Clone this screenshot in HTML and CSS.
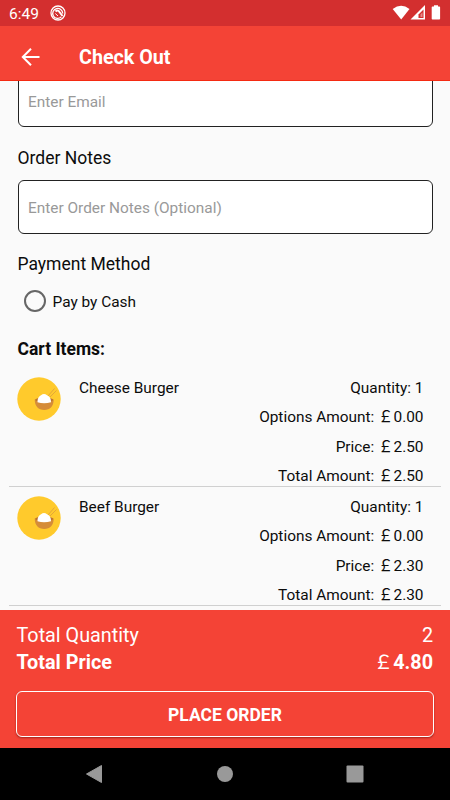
FILE: index.html
```html
<!DOCTYPE html>
<html lang="en">
<head>
<meta charset="utf-8">
<title>Check Out</title>
<link rel="stylesheet" href="styles.css">
</head>
<body>
<div class="screen">
  <div class="status">
    <span class="clock">6:49</span>
    <svg class="app-icon" width="16" height="16" viewBox="0 0 16 16" fill="none" stroke="#fff"><circle cx="8" cy="8" r="7" stroke-width="1.3"/><path d="M11.300 11.900A5 5 0 1 1 12.700 8.500" stroke-width="1.300"/><path d="M5.500 6.500Q8 4.500 9.500 7L12.500 11" stroke-width="2"/><path d="M5.300 8.500L8 11" stroke-width="1"/></svg>
    <svg class="signals" width="50" height="16" viewBox="0 0 50 16"><path d="M.7 4Q9.200-2.400 17.500 4L9.200 14.500Z" fill="#fff"/><path d="M33 0V14.500H18.500Z" fill="#fff"/><path d="M31.500 4.500V13H26.500V9.500Z" fill="#d32f2f"/><path d="M30.500 7.500V12H28.500V9.300Z" fill="#fff" opacity=".45"/><path d="M42 .2h4v1.300h1.300q.8 0 .8.800v11.400q0 .8-.8.800h-6.800q-.8 0-.8-.8V2.300q0-.8.800-.8H42Z" fill="#fff"/></svg>
  </div>
  <header class="appbar">
    <svg class="back" width="20" height="20" viewBox="0 0 20 20" fill="none" stroke="#fff" stroke-width="2"><path d="M18.500 10H2.500M10 1.800L1.800 10L10 18.200"/></svg>
    <h1 class="title">Check Out</h1>
  </header>
  <main class="content">
    <div class="field email">Enter Email</div>
    <h2 class="label">Order Notes</h2>
    <div class="field">Enter Order Notes (Optional)</div>
    <h2 class="label">Payment Method</h2>
    <div class="option"><span class="radio"></span><span class="option-text">Pay by Cash</span></div>
    <h2 class="label cart">Cart Items:</h2>
    <section class="item">
      <svg class="thumb" width="44" height="44" viewBox="0 0 44 44"><circle cx="22" cy="22" r="21.700" fill="#ffca2c"/><path d="M31 19L37.500 11.500M33 20L39.500 13.500" stroke="#e0a13c" stroke-width=".9"/><path d="M17.700 22.500H36.700C36.700 29 33 33 27.200 33S17.700 29 17.700 22.500Z" fill="#d58c38"/><ellipse cx="27.200" cy="22.800" rx="9" ry="2.300" fill="#b9722f"/><path d="M20.500 25.300C20.300 22 22 19 24 18.200Q27 16 30 18.200C32.500 19 34.200 22 34 25.300Q27 27 20.500 25.300Z" fill="#fff"/></svg>
      <div class="name">Cheese Burger</div>
      <div class="details"><div>Quantity: 1</div><div>Options Amount: <span class="pound">&#xFFE1;</span>0.00</div><div>Price: <span class="pound">&#xFFE1;</span>2.50</div><div>Total Amount: <span class="pound">&#xFFE1;</span>2.50</div></div>
    </section>
    <section class="item">
      <svg class="thumb" width="44" height="44" viewBox="0 0 44 44"><circle cx="22" cy="22" r="21.700" fill="#ffca2c"/><path d="M31 19L37.500 11.500M33 20L39.500 13.500" stroke="#e0a13c" stroke-width=".9"/><path d="M17.700 22.500H36.700C36.700 29 33 33 27.200 33S17.700 29 17.700 22.500Z" fill="#d58c38"/><ellipse cx="27.200" cy="22.800" rx="9" ry="2.300" fill="#b9722f"/><path d="M20.500 25.300C20.300 22 22 19 24 18.200Q27 16 30 18.200C32.500 19 34.200 22 34 25.300Q27 27 20.500 25.300Z" fill="#fff"/></svg>
      <div class="name">Beef Burger</div>
      <div class="details"><div>Quantity: 1</div><div>Options Amount: <span class="pound">&#xFFE1;</span>0.00</div><div>Price: <span class="pound">&#xFFE1;</span>2.30</div><div>Total Amount: <span class="pound">&#xFFE1;</span>2.30</div></div>
    </section>
  </main>
  <footer class="summary">
    <div class="line quantity"><span>Total Quantity</span><span>2</span></div>
    <div class="line price"><span>Total Price</span><span><span class="pound">&#xFFE1;</span>4.80</span></div>
    <button class="order">PLACE ORDER</button>
  </footer>
  <nav class="navbar">
    <svg width="18" height="20" viewBox="0 0 18 20"><path d="M15.500 1.500V18.500L.5 10Z" fill="#999" stroke="#999" stroke-linejoin="round"/></svg>
    <svg width="18" height="20" viewBox="0 0 18 20"><circle cx="9" cy="10" r="8" fill="#999"/></svg>
    <svg width="18" height="20" viewBox="0 0 18 20"><rect x=".5" y="1.500" width="17" height="17" rx="1" fill="#999"/></svg>
  </nav>
</div>
</body>
</html>
```
FILE: styles.css
```css
* { box-sizing: border-box; }
body { margin: 0; font-family: Roboto, "Noto Sans CJK SC", sans-serif; color: #0c0c0c; }
.screen { width: 450px; height: 800px; display: flex; flex-direction: column; overflow: hidden; background: #fafafa; }
.status { height: 26px; flex: none; display: flex; align-items: center; padding: 0 8px 0 9px; background: #d32f2f; color: #fff; }
.clock { font-size: 15.5px; width: 41px; padding-top: 2px; }
.signals { margin-left: auto; }
.appbar { height: 55px; flex: none; display: flex; align-items: center; padding: 7px 0 0 21px; background: #f44336; border-bottom: 1px solid #f42a12; color: #fff; }
.title { margin: 0 0 0 38px; padding-top: 2px; font-size: 19.7px; font-weight: 700; line-height: 24px; }
.content { height: 529px; flex: none; overflow: hidden; }
.field { height: 54px; margin: 0 17px 0 17.5px; padding: 1px 0 0 9.5px; border: 1px solid #222; border-radius: 6px; background: #fff; display: flex; align-items: center; font-size: 15.4px; color: #999; white-space: nowrap; }
.email { margin-top: -8px; margin-bottom: 1px; padding-top: 4px; }
.label { margin: 0 17.5px; height: 52px; line-height: 60px; font-size: 17.5px; font-weight: 400; }
.option { height: 30px; padding: 0 0 0 24px; display: flex; align-items: center; gap: 6.5px; font-size: 15.4px; }
.option-text { padding-top: 2px; }
.radio { width: 22px; height: 22px; border: 2px solid #666; border-radius: 50%; }
.cart { font-weight: 700; height: 52px; line-height: 66px; }
.item { height: 119px; margin: 0 9px; padding: 0 17.5px 0 8.5px; border-bottom: 1px solid #d0d0d0; display: flex; align-items: flex-start; font-size: 15.4px; line-height: 29.4px; }
.thumb { margin: 9px 0 0 -.5px; flex: none; }
.name { margin: 6px 0 0 18px; }
.details { margin: 6px 0 0 auto; text-align: right; }
.pound { font-family: "Noto Sans CJK SC"; font-weight: 400; line-height: 1; }
.summary { height: 138px; flex: none; background: #f44336; color: #fff; padding: 13px 17px 0 16.5px; }
.line { display: flex; justify-content: space-between; height: 26.5px; line-height: 26.5px; font-size: 19.8px; }
.price { font-weight: 700; }
.order { display: block; width: 418px; height: 46px; margin: 15px 0 0 -.5px; border: 1px solid #fff; border-radius: 6px; background: #f44336; color: #fff; font: 700 17.5px Roboto, sans-serif; box-shadow: 0 1px 2px rgba(80,0,0,.5); padding: 1px 0 0; }
.navbar { height: 52px; flex: none; background: #000; display: flex; justify-content: space-between; align-items: center; padding: 0 86px; }
```
